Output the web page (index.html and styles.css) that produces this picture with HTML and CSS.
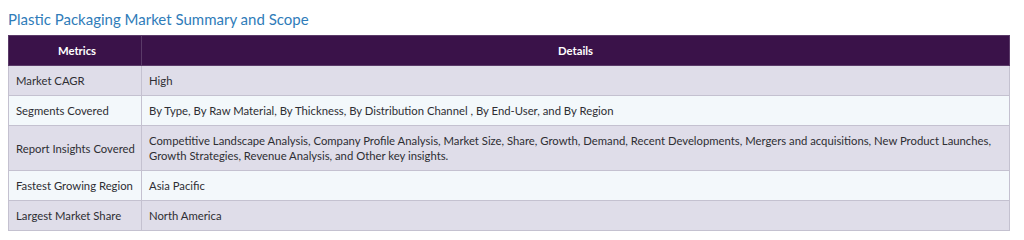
FILE: index.html
```html
<!DOCTYPE html>
<html lang="en">
<head>
<meta charset="utf-8">
<title>Plastic Packaging Market Summary and Scope</title>
<link rel="stylesheet" href="styles.css">
</head>
<body>
<h2 class="scope-title">Plastic Packaging Market Summary and Scope</h2>
<table class="scope-table">
  <thead>
    <tr>
      <th class="col-metric">Metrics</th>
      <th>Details</th>
    </tr>
  </thead>
  <tbody>
    <tr>
      <td>Market CAGR</td>
      <td>High</td>
    </tr>
    <tr>
      <td>Segments Covered</td>
      <td>By Type, By Raw Material, By Thickness, By Distribution Channel , By End-User, and By Region</td>
    </tr>
    <tr>
      <td>Report Insights Covered</td>
      <td>Competitive Landscape Analysis, Company Profile Analysis, Market Size, Share, Growth, Demand, Recent Developments, Mergers and acquisitions, New Product Launches, Growth Strategies, Revenue Analysis, and Other key insights.</td>
    </tr>
    <tr>
      <td>Fastest Growing Region</td>
      <td>Asia Pacific</td>
    </tr>
    <tr>
      <td>Largest Market Share</td>
      <td>North America</td>
    </tr>
  </tbody>
</table>
</body>
</html>
```
FILE: styles.css
```css
body {
  margin: 8px;
  background: #ffffff;
  font-family: Lato, "Noto Sans", sans-serif;
  color: #2e2e33;
}

.scope-title {
  margin: 0 0 7px;
  padding-top: 2px;
  font-size: 15px;
  font-weight: 400;
  line-height: 18px;
  color: #2f7cb9;
}

.scope-table {
  width: 1002px;
  border-collapse: collapse;
  font-size: 11.3px;
  line-height: 15px;
}

.scope-table th,
.scope-table td {
  border: 1px solid #c4c1d0;
  padding: 7px 7px;
  text-align: left;
  vertical-align: middle;
}

.scope-table th {
  background: #3a1249;
  color: #ffffff;
  font-weight: 700;
  text-align: center;
  border-color: #5a3a68;
}

/* metric label column: fixed width, labels stay on one line */
.scope-table .col-metric,
.scope-table td:first-child {
  width: 122px;
  padding-right: 3px;
  white-space: nowrap;
}

.scope-table tbody tr:nth-child(odd) td {
  background: #dfdde9;
}

.scope-table tbody tr:nth-child(even) td {
  background: #f3f8fb;
}
```
